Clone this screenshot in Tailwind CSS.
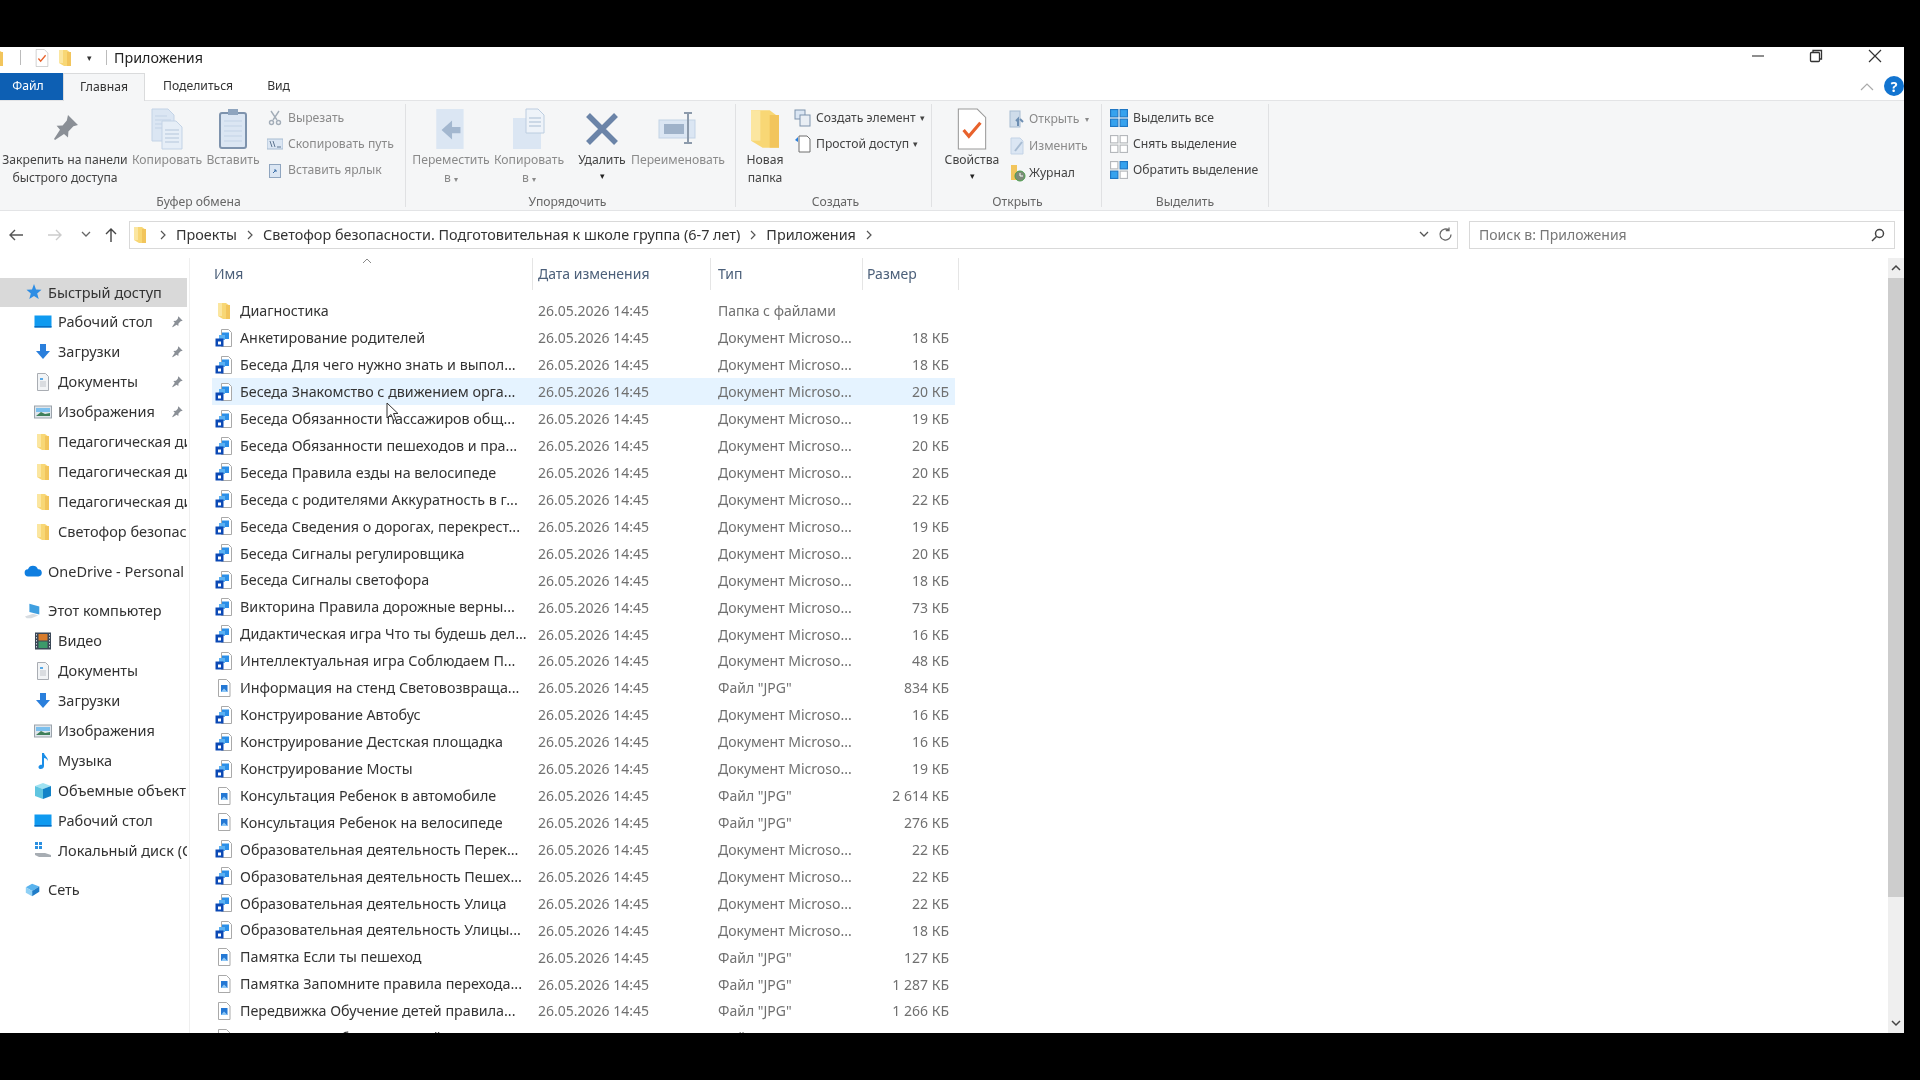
<!DOCTYPE html>
<html lang="ru">
<head>
  <meta charset="UTF-8" />
  <title>Приложения</title>
  <script src="https://cdn.jsdelivr.net/npm/@tailwindcss/browser@4"></script>
</head>
<body class="bg-black overflow-hidden">
  <!-- icon sprites -->
  <svg class="hidden">
    <symbol id="folder" viewBox="0 0 18 18"><path d="M3 1h8l4 3v13H8l-5-3z" fill="#f8d775"/><path d="M3 1h4v13H3z" fill="#fbe6a0"/><path d="M11 3h4v14h-4z" fill="#f2c55c"/></symbol>
    <symbol id="word" viewBox="0 0 18 18"><path d="M6.500.5h7l3 3v14h-10z" fill="#fff" stroke="#a9a9a9"/><rect x="7" y="3.500" width="7" height="6.500" fill="#2b8fe8"/><rect x="4" y="6" width="6" height="5" fill="#5ab0f2"/><path d="M0.500 9.500h8v8h-8z" fill="#0b49b5"/><rect x="3" y="12.500" width="3" height="3" fill="#fff"/></symbol>
    <symbol id="jpg" viewBox="0 0 18 18"><path d="M3.500.5h8l3.500 3.500v13.500H3.500z" fill="#fff" stroke="#a9a9a9"/><rect x="6" y="6" width="6.500" height="7" fill="#2478d4"/><path d="M6 13l3-3.500 3.500 3.500" fill="#8cc6f5"/></symbol>
    <symbol id="pin" viewBox="0 0 16 16"><path d="M9.500 1.500l5 5-2.300.6-2.500 2.600-.2 3-2-1.700L3 14l-.5-.5 3-4.600-1.700-2 3-.2 2.100-2.500z" fill="#8a8f96"/></symbol>
    <symbol id="desktop" viewBox="0 0 18 18"><rect x="0.500" y="2.500" width="17" height="12" fill="#0f9af0"/><rect x="0.500" y="13" width="17" height="1.500" fill="#0a6cc0"/></symbol>
    <symbol id="down" viewBox="0 0 18 18"><path d="M6 1h6v7h4l-7 8-7-8h4z" fill="#2a7fdc"/></symbol>
    <symbol id="docs" viewBox="0 0 18 18"><path d="M3.500.5h8l3 3v14h-11z" fill="#f2f4f6" stroke="#a9adb3"/><path d="M6 5h3v2H6z" fill="#5aa9e6"/><path d="M6 9h6M6 11h6M6 13h6" stroke="#c0c4ca"/></symbol>
    <symbol id="pics" viewBox="0 0 18 18"><rect x="0.500" y="3" width="17" height="12" fill="#dfe6ec" stroke="#9ba3ab"/><path d="M2 5h14v4H2z" fill="#7cc0ee"/><path d="M2 13l5-4 4 2 5-1v3z" fill="#3f7f5a"/></symbol>
    <symbol id="star" viewBox="0 0 18 18"><path d="M10 1l2 5.500 5.500.3-4.300 3.600 1.500 5.600-4.700-3.100-4.700 3.100 1.500-5.600L2.500 6.800 8 6.500z" fill="#2d8de4"/></symbol>
    <symbol id="cloud" viewBox="0 0 20 14"><path d="M5 13a4 4 0 0 1-.6-8A6 6 0 0 1 15.500 5 4 4 0 0 1 16 13z" fill="#0f7ee0"/></symbol>
    <symbol id="pc" viewBox="0 0 20 18"><path d="M6 1l11 3v9L6 10z" fill="#3f9fe0"/><path d="M1 15l9-3 6 2-8 3H3z" fill="#d8dde2"/></symbol>
    <symbol id="video" viewBox="0 0 18 18"><rect x="1" y="0.500" width="16" height="17" fill="#3a4756"/><rect x="4.500" y="2" width="9" height="6.500" fill="#d87c2c"/><rect x="4.500" y="9.500" width="9" height="6.500" fill="#3c9a6a"/><path d="M2.500 2v14M15.500 2v14" stroke="#c8d0d8" stroke-dasharray="1.500 1.500"/></symbol>
    <symbol id="music" viewBox="0 0 18 18"><path d="M8 1h2c.5 3 4 4 4 8-1-2-2.500-3-4-3v8c0 2-2 3.500-4 3s-2-3 0-4c.8-.4 1.500-.4 2-.2z" fill="#1b8ee8"/></symbol>
    <symbol id="cube" viewBox="0 0 18 18"><path d="M9 1l8 3-8 3-8-3z" fill="#9fe2f2"/><path d="M1 4l8 3v10l-8-3z" fill="#5fc5e0"/><path d="M17 4L9 7v10l8-3z" fill="#1283c8"/></symbol>
    <symbol id="disk" viewBox="0 0 18 18"><rect x="1" y="1" width="3" height="3" fill="#2a8fe0"/><rect x="5" y="1" width="3" height="3" fill="#2a8fe0"/><rect x="1" y="5" width="3" height="3" fill="#2a8fe0"/><rect x="5" y="5" width="3" height="3" fill="#2a8fe0"/><path d="M1 12h10l6 2v2H5l-4-2z" fill="#a7adb3"/></symbol>
    <symbol id="net" viewBox="0 0 20 18"><path d="M2 6l7-4 8 3-8 5z" fill="#59b3ee"/><path d="M9 10l8-5v6l-8 5z" fill="#1f7cc8"/><path d="M2 6l7 4v6l-7-4z" fill="#8fd0f5"/></symbol>
    <symbol id="sheets" viewBox="0 0 34 42"><path d="M2 1h16l6 6v26H2z" fill="#dbe6f3" stroke="#c3d3e6"/><path d="M5 8h12M5 12h16M5 16h16M5 20h16" stroke="#c3d3e6"/><path d="M12 13h14l6 6v22H12z" fill="#e6eef7" stroke="#c3d3e6"/><path d="M15 22h14M15 26h14M15 30h14M15 34h14" stroke="#b4c6db"/></symbol>
    <symbol id="copyto" viewBox="0 0 34 42"><rect x="1" y="10" width="28" height="31" fill="#dbe6f3"/><path d="M14 1h12l6 6v18H14z" fill="#eef3f9" stroke="#bccde0"/><path d="M17 10h12M17 14h12M17 18h12" stroke="#a9bdd3"/></symbol>
    <symbol id="sel" viewBox="0 0 16 16"><rect x="0.500" y="0.500" width="6.500" height="6.500" fill="#36a2ee" stroke="#1f77c4"/><rect x="9" y="0.500" width="6.500" height="6.500" fill="#36a2ee" stroke="#1f77c4"/><rect x="0.500" y="9" width="6.500" height="6.500" fill="#36a2ee" stroke="#1f77c4"/><rect x="9" y="9" width="6.500" height="6.500" fill="#36a2ee" stroke="#1f77c4"/></symbol>
    <symbol id="unsel" viewBox="0 0 16 16"><rect x="0.500" y="0.500" width="6.500" height="6.500" fill="#fff" stroke="#b5b8bc"/><rect x="9" y="0.500" width="6.500" height="6.500" fill="#fff" stroke="#b5b8bc"/><rect x="0.500" y="9" width="6.500" height="6.500" fill="#fff" stroke="#b5b8bc"/><rect x="9" y="9" width="6.500" height="6.500" fill="#fff" stroke="#b5b8bc"/></symbol>
    <symbol id="invsel" viewBox="0 0 16 16"><rect x="0.500" y="0.500" width="6.500" height="6.500" fill="#fff" stroke="#b5b8bc"/><rect x="9" y="0.500" width="6.500" height="6.500" fill="#36a2ee" stroke="#1f77c4"/><rect x="0.500" y="9" width="6.500" height="6.500" fill="#36a2ee" stroke="#1f77c4"/><rect x="9" y="9" width="6.500" height="6.500" fill="#fff" stroke="#b5b8bc"/></symbol>
    <symbol id="check" viewBox="0 0 30 40"><path d="M2 1h18l8 8v30H2z" fill="#fff" stroke="#9a9a9a"/><path d="M7 21l5 6 11-13" fill="none" stroke="#e8622c" stroke-width="3"/></symbol>
    <symbol id="crumb" viewBox="0 0 6 10"><path d="M1 1l4 4-4 4" fill="none" stroke="#555" stroke-width="1.200"/></symbol>
  </svg>

  <div class="mt-[47px] w-[1904px] h-[986px] bg-white flex flex-col overflow-hidden relative blur-[0.4px] text-[#333] text-[14.300px]" style="font-family:'Noto Sans','Liberation Sans',sans-serif">

    <!-- title bar -->
    <div class="h-[21px] flex items-center shrink-0">
      <svg class="w-[18px] h-[18px] -ml-[12px]"><use href="#folder"/></svg>
      <div class="w-px h-[15px] bg-[#bbb] ml-[14px]"></div>
      <svg class="w-[16px] h-[18px] ml-[13px]"><use href="#check"/></svg>
      <svg class="w-[18px] h-[18px] ml-[6px]"><use href="#folder"/></svg>
      <span class="ml-[13px] text-[9px] leading-none">▾</span>
      <div class="w-px h-[15px] bg-[#bbb] ml-[14px]"></div>
      <span class="ml-[7px] text-[#222]">Приложения</span>
      <div class="ml-auto flex items-center -mt-[3px]">
        <svg class="w-[14px] h-[14px]" viewBox="0 0 14 14"><path d="M1 7h12" stroke="#444" stroke-width="1.200"/></svg>
        <svg class="w-[14px] h-[14px] ml-[44px]" viewBox="0 0 14 14" fill="none" stroke="#333" stroke-width="1.300"><rect x="1.500" y="3.500" width="9" height="9" rx="1"/><path d="M4 3V1.500h8.500V10H11"/></svg>
        <svg class="w-[14px] h-[14px] ml-[45px] mr-[22px]" viewBox="0 0 14 14" fill="none" stroke="#333" stroke-width="1.200"><path d="M1 1l12 12M13 1L1 13"/></svg>
      </div>
    </div>

    <!-- tabs -->
    <div class="h-[32px] pt-[5px] flex items-stretch shrink-0 text-[12.200px] relative">
      <div class="w-[63px] pr-[7px] bg-[#0d5fb3] text-white flex items-center justify-center">Файл</div>
      <div class="w-[82px] flex items-center justify-center border-x border-t border-[#dadbdc] bg-[#f5f6f7] -mb-px relative z-10">Главная</div>
      <div class="ml-[18px] flex items-center">Поделиться</div>
      <div class="ml-[34px] flex items-center">Вид</div>
      <svg class="absolute left-[1860px] top-[14px] w-[14px] h-[9px]" viewBox="0 0 14 9" fill="none" stroke="#aaa" stroke-width="1.200"><path d="M1 8l6-6 6 6"/></svg>
      <div class="absolute left-[1884px] top-[8px] w-[20px] h-[20px] rounded-full bg-[#1274d0] text-white text-[14px] font-bold flex items-center justify-center">?</div>
    </div>

    <!-- ribbon -->
    <div class="h-[111px] shrink-0 bg-[#f5f6f7] border-y border-[#e3e4e6] flex text-[12.200px] leading-[18px] text-[#8a8a8a]">
      <!-- clipboard -->
      <div class="w-[406px] border-r border-[#e0e1e3] flex flex-col my-[3px]">
        <div class="flex h-[86px] shrink-0">
          <div class="w-[130px] flex flex-col items-center text-[#444]">
            <svg class="w-[32px] h-[32px] mt-[8px] mb-[7px]"><use href="#pin"/></svg>
            <span class="whitespace-nowrap">Закрепить на панели</span><span>быстрого доступа</span>
          </div>
          <div class="w-[74px] flex flex-col items-center">
            <svg class="w-[34px] h-[42px] mt-[4px] mb-[1px]"><use href="#sheets"/></svg><span>Копировать</span>
          </div>
          <div class="w-[58px] flex flex-col items-center">
            <svg class="w-[30px] h-[42px] mt-[4px] mb-[1px]" viewBox="0 0 30 40"><rect x="2" y="4" width="26" height="35" rx="2" fill="#dbe6f3" stroke="#7e93ad" stroke-width="2"/><rect x="10" y="0" width="10" height="6" fill="#8fa5bf"/><path d="M6 12h18M6 17h18M6 22h18M6 27h18M6 32h18" stroke="#c3d3e6"/></svg><span>Вставить</span>
          </div>
          <div class="flex flex-col gap-[8px] pt-[5px] pl-[5px]">
            <div class="flex items-center gap-[5px]"><svg class="w-[16px] h-[16px]" viewBox="0 0 16 16" fill="none" stroke="#a3adb8" stroke-width="1.400"><path d="M4 1l6 9M12 1L6 10"/><circle cx="4.500" cy="12.500" r="2"/><circle cx="11.500" cy="12.500" r="2"/></svg>Вырезать</div>
            <div class="flex items-center gap-[5px]"><svg class="w-[16px] h-[16px]" viewBox="0 0 16 16"><rect y="3" width="16" height="10" fill="#dbe6f3" stroke="#a8bcd2"/><path d="M3 5l2 6M6 5l2 6M10 11h4" stroke="#5f7691"/></svg>Скопировать путь</div>
            <div class="flex items-center gap-[5px]"><svg class="w-[16px] h-[16px]" viewBox="0 0 16 16"><rect x="2.500" y="2.500" width="11" height="13" fill="#dbe6f3" stroke="#8fa5bf"/><path d="M6 11l3-3M7 8h2v2" stroke="#3a6ea8" fill="none"/></svg>Вставить ярлык</div>
          </div>
        </div>
        <div class="text-center text-[#666] pt-[3px] pr-[8px]">Буфер обмена</div>
      </div>
      <!-- organize -->
      <div class="w-[330px] border-r border-[#e0e1e3] flex flex-col my-[3px]">
        <div class="flex h-[86px] shrink-0 pl-[7px]">
          <div class="w-[76px] flex flex-col items-center">
            <svg class="w-[36px] h-[42px] mt-[4px] mb-[1px]" viewBox="0 0 30 40"><rect x="1" y="1" width="26" height="38" fill="#dbe6f3"/><path d="M24 18h-8v-6l-10 9 10 9v-6h8z" fill="#a3b7cf"/></svg><span>Переместить</span><span>в <small class="text-[8px]">▾</small></span>
          </div>
          <div class="w-[80px] flex flex-col items-center">
            <svg class="w-[34px] h-[42px] mt-[4px] mb-[1px]"><use href="#copyto"/></svg><span>Копировать</span><span>в <small class="text-[8px]">▾</small></span>
          </div>
          <div class="w-[66px] flex flex-col items-center text-[#444]">
            <svg class="w-[34px] h-[34px] mt-[8px] mb-[5px]" viewBox="0 0 34 34" fill="none" stroke="#6b84a8" stroke-width="5.500"><path d="M3 3l28 28M31 3L3 31"/></svg><span>Удалить</span><span class="text-[9px] leading-[14px] text-[#222]">▾</span>
          </div>
          <div class="w-[86px] flex flex-col items-center">
            <svg class="w-[40px] h-[36px] mt-[6px] mb-[5px]" viewBox="0 0 40 36" fill="none"><rect x="1" y="10" width="36" height="18" fill="#dbe6f3" stroke="#c3d3e6"/><rect x="6" y="14" width="20" height="10" fill="#9fb2c9"/><path d="M26 3h8M30 3v30M26 33h8" stroke="#8c9aab" stroke-width="2"/></svg><span>Переименовать</span>
          </div>
        </div>
        <div class="text-center text-[#666] pt-[3px] pr-[6px]">Упорядочить</div>
      </div>
      <!-- new -->
      <div class="w-[196px] border-r border-[#e0e1e3] flex flex-col my-[3px]">
        <div class="flex h-[86px] shrink-0 text-[#444]">
          <div class="w-[58px] flex flex-col items-center">
            <svg class="w-[42px] h-[42px] mt-[4px] mb-[1px]"><use href="#folder"/></svg><span>Новая</span><span>папка</span>
          </div>
          <div class="flex flex-col gap-[8px] pt-[5px]">
            <div class="flex items-center gap-[4px] whitespace-nowrap"><svg class="w-[18px] h-[18px]" viewBox="0 0 18 18"><rect x="1" y="1" width="10" height="9" fill="#dbe6f3" stroke="#7e93ad"/><rect x="6" y="6" width="10" height="11" fill="#e9eef4" stroke="#7e93ad"/></svg>Создать элемент <span class="text-[9px]">▾</span></div>
            <div class="flex items-center gap-[4px] whitespace-nowrap"><svg class="w-[18px] h-[18px]" viewBox="0 0 18 18"><path d="M5 1h8l3 3v13H5z" fill="#fff" stroke="#6f6f6f"/><path d="M1 5l3-3v5z" fill="#2a7fdc"/></svg>Простой доступ <span class="text-[9px]">▾</span></div>
          </div>
        </div>
        <div class="text-center text-[#666] pt-[3px] pl-[4px]">Создать</div>
      </div>
      <!-- open -->
      <div class="w-[170px] border-r border-[#e0e1e3] flex flex-col my-[3px]">
        <div class="flex h-[86px] shrink-0">
          <div class="w-[80px] flex flex-col items-center text-[#444]">
            <svg class="w-[32px] h-[42px] mt-[4px] mb-[1px]"><use href="#check"/></svg><span>Свойства</span><span class="text-[9px] leading-[14px] text-[#222]">▾</span>
          </div>
          <div class="flex flex-col gap-[9px] pt-[6px] -ml-[3px]">
            <div class="flex items-center gap-[3px]"><svg class="w-[17px] h-[18px]" viewBox="0 0 17 18"><rect x="1" y="1" width="10" height="16" fill="#cfdcea" stroke="#a8bcd2"/><path d="M9 16V9l-2 2M11 9l3 3" stroke="#6e8fb3" stroke-width="2" fill="none"/></svg>Открыть <small class="text-[8px] pl-[3px]">▾</small></div>
            <div class="flex items-center gap-[3px]"><svg class="w-[17px] h-[18px]" viewBox="0 0 17 18"><path d="M2 1h9l3 3v13H2z" fill="#dbe6f3" stroke="#c3d3e6"/><path d="M6 14l7-9" stroke="#a8bcd2" stroke-width="2"/></svg>Изменить</div>
            <div class="flex items-center gap-[3px] text-[#444]"><svg class="w-[17px] h-[18px]" viewBox="0 0 17 18"><path d="M2 1h6v15H2z" fill="#f2c55c"/><circle cx="11" cy="12" r="5" fill="#7d8b7a" stroke="#4a9c4a"/><path d="M11 9v3h3" stroke="#fff" fill="none"/></svg>Журнал</div>
          </div>
        </div>
        <div class="text-center text-[#666] pt-[3px] pl-[2px]">Открыть</div>
      </div>
      <!-- select -->
      <div class="w-[167px] border-r border-[#e0e1e3] flex flex-col my-[3px] text-[#444]">
        <div class="flex flex-col gap-[8px] h-[86px] shrink-0 pt-[5px] pl-[8px]">
          <div class="flex items-center gap-[5px] whitespace-nowrap"><svg class="w-[18px] h-[18px]"><use href="#sel"/></svg>Выделить все</div>
          <div class="flex items-center gap-[5px] whitespace-nowrap"><svg class="w-[18px] h-[18px]"><use href="#unsel"/></svg>Снять выделение</div>
          <div class="flex items-center gap-[5px] whitespace-nowrap"><svg class="w-[18px] h-[18px]"><use href="#invsel"/></svg>Обратить выделение</div>
        </div>
        <div class="text-center text-[#666] pt-[3px]">Выделить</div>
      </div>
    </div>

    <!-- address row -->
    <div class="h-[47px] shrink-0 flex items-center relative">
      <svg class="w-[16px] h-[14px] ml-[8px]" viewBox="0 0 16 14" fill="none" stroke="#555" stroke-width="1.400"><path d="M15 7H2M7 2L2 7l5 5"/></svg>
      <svg class="w-[16px] h-[14px] ml-[23px]" viewBox="0 0 16 14" fill="none" stroke="#ccc" stroke-width="1.400"><path d="M1 7h13M9 2l5 5-5 5"/></svg>
      <svg class="w-[10px] h-[7px] ml-[18px]" viewBox="0 0 10 7" fill="none" stroke="#666" stroke-width="1.300"><path d="M1 1l4 4 4-4"/></svg>
      <svg class="w-[14px] h-[16px] ml-[13px]" viewBox="0 0 14 16" fill="none" stroke="#444" stroke-width="1.400"><path d="M7 15V2M2 7l5-5 5 5"/></svg>
      <div class="ml-[11px] w-[1329px] h-[28px] border border-[#d9d9d9] flex items-center relative text-[#333] text-[14.400px]">
        <svg class="w-[18px] h-[18px] ml-[1px]"><use href="#folder"/></svg>
        <svg class="w-[6px] h-[10px] ml-[11px]"><use href="#crumb"/></svg>
        <span class="ml-[10px]">Проекты</span>
        <svg class="w-[6px] h-[10px] ml-[10px]"><use href="#crumb"/></svg>
        <span class="ml-[10px] whitespace-nowrap">Светофор безопасности. Подготовительная к школе группа (6-7 лет)</span>
        <svg class="w-[6px] h-[10px] ml-[10px]"><use href="#crumb"/></svg>
        <span class="ml-[10px]">Приложения</span>
        <svg class="w-[6px] h-[10px] ml-[10px]"><use href="#crumb"/></svg>
        <svg class="absolute right-[28px] w-[10px] h-[7px]" viewBox="0 0 10 7" fill="none" stroke="#555" stroke-width="1.300"><path d="M1 1l4 4 4-4"/></svg>
        <svg class="absolute right-[4px] w-[15px] h-[15px]" viewBox="0 0 15 15" fill="none" stroke="#666" stroke-width="1.300"><path d="M13 7.500A5.500 5.500 0 1 1 11 3.300M11 .5v3.200H7.800"/></svg>
      </div>
      <div class="ml-[11px] w-[426px] h-[28px] border border-[#d9d9d9] flex items-center px-[9px] text-[#777] text-[14px]">
        Поиск в: Приложения
        <svg class="ml-auto w-[14px] h-[14px]" viewBox="0 0 14 14" fill="none" stroke="#444" stroke-width="1.500"><circle cx="8.500" cy="5.500" r="4"/><path d="M5.500 8.500L1 13"/></svg>
      </div>
    </div>

    <!-- main -->
    <div class="flex-1 flex min-h-0">
      <!-- nav pane -->
      <div id="nav" class="w-[190px] shrink-0 border-r border-[#efefef] overflow-hidden pt-[19.500px] text-[14.500px]"></div>

      <!-- file list -->
      <div class="flex-1 min-w-0 relative overflow-hidden">
        <div class="h-[39.500px] flex items-center text-[14px] text-[#4c607a] relative">
          <span class="absolute left-[24px] top-[5px]">Имя</span>
          <svg class="absolute left-[172px] top-0 w-[10px] h-[6px]" viewBox="0 0 10 6" fill="none" stroke="#888"><path d="M1 5l4-4 4 4"/></svg>
          <div class="absolute left-[342px] top-0 h-[32px] w-px bg-[#e5e5e5]"></div>
          <span class="absolute left-[348px] top-[5px]">Дата изменения</span>
          <div class="absolute left-[520px] top-0 h-[32px] w-px bg-[#e5e5e5]"></div>
          <span class="absolute left-[528px] top-[5px]">Тип</span>
          <div class="absolute left-[672px] top-0 h-[32px] w-px bg-[#e5e5e5]"></div>
          <span class="absolute left-[677px] top-[5px]">Размер</span>
          <div class="absolute left-[768px] top-0 h-[32px] w-px bg-[#e5e5e5]"></div>
        </div>
        <div id="rows"></div>

        <!-- scrollbar -->
        <div class="absolute right-0 top-0 bottom-0 w-[16px] bg-[#efefef] flex flex-col items-center">
          <svg class="w-[10px] h-[20px] shrink-0" viewBox="0 0 10 20" fill="none" stroke="#444" stroke-width="1.500"><path d="M1 12l4-4 4 4"/></svg>
          <div class="w-full h-[619px] bg-[#cdcdcd]"></div>
          <svg class="w-[10px] h-[20px] mt-auto shrink-0" viewBox="0 0 10 20" fill="none" stroke="#444" stroke-width="1.500"><path d="M1 8l4 4 4-4"/></svg>
        </div>

        <!-- mouse pointer -->
        <svg class="absolute left-[196px] top-[144px] w-[13px] h-[20px]" viewBox="0 0 13 20"><path d="M1 1v15l4-3.500 2.500 6 2.500-1-2.500-6H12z" fill="#fff" stroke="#333"/></svg>
      </div>
    </div>
  </div>

  <script>
    const nav = [
      ['star', 'Быстрый доступ', 0, 0, 1],
      ['desktop', 'Рабочий стол', 1, 1],
      ['down', 'Загрузки', 1, 1],
      ['docs', 'Документы', 1, 1],
      ['pics', 'Изображения', 1, 1],
      ['folder', 'Педагогическая диагностика', 1],
      ['folder', 'Педагогическая диагностика', 1],
      ['folder', 'Педагогическая диагностика', 1],
      ['folder', 'Светофор безопасности', 1],
      null,
      ['cloud', 'OneDrive - Personal', 0],
      null,
      ['pc', 'Этот компьютер', 0],
      ['video', 'Видео', 1],
      ['docs', 'Документы', 1],
      ['down', 'Загрузки', 1],
      ['pics', 'Изображения', 1],
      ['music', 'Музыка', 1],
      ['cube', 'Объемные объекты', 1],
      ['desktop', 'Рабочий стол', 1],
      ['disk', 'Локальный диск (C:)', 1],
      null,
      ['net', 'Сеть', 0],
    ];
    document.getElementById('nav').innerHTML = nav.map(n => {
      if (!n) return '<div class="h-[10px]"></div>';
      const [icon, text, child, pinned, active] = n;
      return `<div class="h-[29.900px] flex items-center relative whitespace-nowrap overflow-hidden ${active ? 'bg-[#d9d9d9] w-[187px]' : 'w-[187px]'}">
        <svg class="absolute ${child ? 'left-[34px]' : 'left-[24px]'} w-[18px] h-[18px]"><use href="#${icon}"/></svg>
        <span class="${child ? 'ml-[58px] w-[129px] overflow-hidden' : 'ml-[48px]'}">${text}</span>
        ${pinned ? '<svg class="absolute left-[170px] w-[14px] h-[14px]"><use href="#pin"/></svg>' : ''}
      </div>`;
    }).join('');

    const doc = 'Документ Microso...';
    const jpg = 'Файл "JPG"';
    const files = [
      ['folder', 'Диагностика', 'Папка с файлами', ''],
      ['word', 'Анкетирование родителей', doc, '18 КБ'],
      ['word', 'Беседа Для чего нужно знать и выпол...', doc, '18 КБ'],
      ['word', 'Беседа Знакомство с движением орга...', doc, '20 КБ'],
      ['word', 'Беседа Обязанности пассажиров общ...', doc, '19 КБ'],
      ['word', 'Беседа Обязанности пешеходов и пра...', doc, '20 КБ'],
      ['word', 'Беседа Правила езды на велосипеде', doc, '20 КБ'],
      ['word', 'Беседа с родителями Аккуратность в г...', doc, '22 КБ'],
      ['word', 'Беседа Сведения о дорогах, перекрест...', doc, '19 КБ'],
      ['word', 'Беседа Сигналы регулировщика', doc, '20 КБ'],
      ['word', 'Беседа Сигналы светофора', doc, '18 КБ'],
      ['word', 'Викторина Правила дорожные верны...', doc, '73 КБ'],
      ['word', 'Дидактическая игра Что ты будешь дел...', doc, '16 КБ'],
      ['word', 'Интеллектуальная игра Соблюдаем П...', doc, '48 КБ'],
      ['jpg', 'Информация на стенд Световозвраща...', jpg, '834 КБ'],
      ['word', 'Конструирование Автобус', doc, '16 КБ'],
      ['word', 'Конструирование Дестская площадка', doc, '16 КБ'],
      ['word', 'Конструирование Мосты', doc, '19 КБ'],
      ['jpg', 'Консультация Ребенок в автомобиле', jpg, '2 614 КБ'],
      ['jpg', 'Консультация Ребенок на велосипеде', jpg, '276 КБ'],
      ['word', 'Образовательная деятельность Перек...', doc, '22 КБ'],
      ['word', 'Образовательная деятельность Пешех...', doc, '22 КБ'],
      ['word', 'Образовательная деятельность Улица', doc, '22 КБ'],
      ['word', 'Образовательная деятельность Улицы...', doc, '18 КБ'],
      ['jpg', 'Памятка Если ты пешеход', jpg, '127 КБ'],
      ['jpg', 'Памятка Запомните правила перехода...', jpg, '1 287 КБ'],
      ['jpg', 'Передвижка Обучение детей правила...', jpg, '1 266 КБ'],
      ['jpg', 'Передвижка Обучение детей...', jpg, '964 КБ'],
    ];
    document.getElementById('rows').innerHTML = files.map(([icon, name, type, size], i) => `
      <div class="h-[26.930px] w-[743px] ml-[22px] flex items-center whitespace-nowrap ${i === 3 ? 'bg-[#e5f3ff]' : ''}">
        <svg class="w-[18px] h-[18px] ml-[3px] shrink-0"><use href="#${icon}"/></svg>
        <span class="ml-[7px] w-[298px] shrink-0 text-[#333]">${name}</span>
        <span class="w-[180px] shrink-0 text-[#707070] text-[14px]">26.05.2026 14:45</span>
        <span class="w-[140px] shrink-0 text-[#707070] text-[14px]">${type}</span>
        <span class="w-[91px] shrink-0 text-right text-[#707070] text-[14px]">${size}</span>
      </div>`).join('');
  </script>
</body>
</html>
